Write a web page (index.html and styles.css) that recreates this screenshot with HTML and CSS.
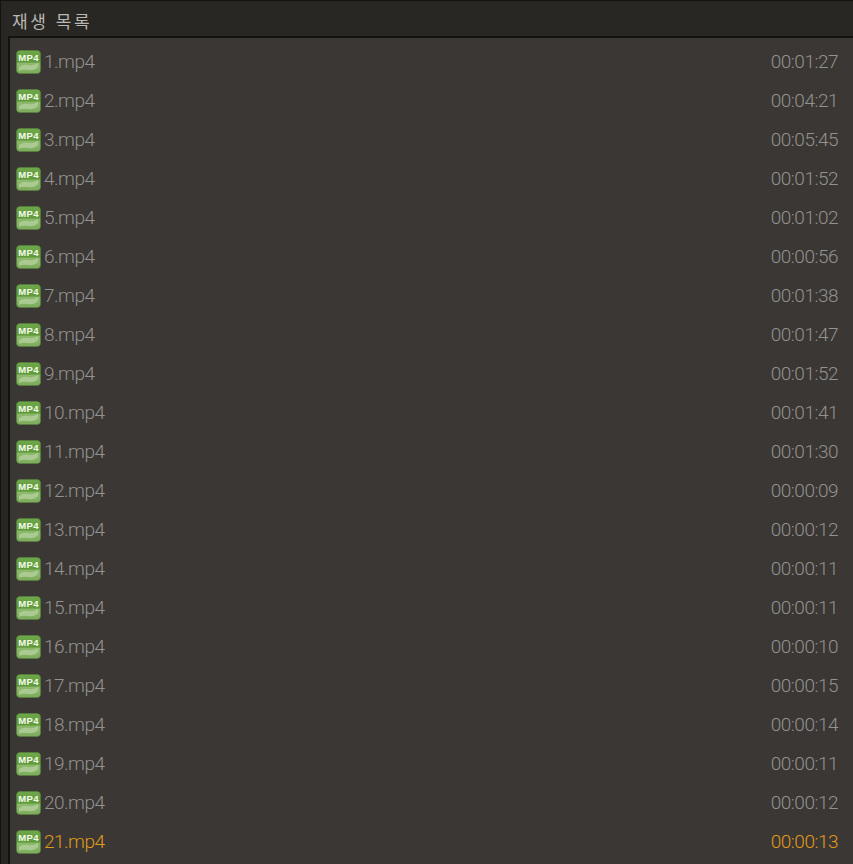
FILE: index.html
```html
<!DOCTYPE html>
<html lang="ko">
<head>
<meta charset="utf-8">
<title>재생 목록</title>
<link rel="stylesheet" href="styles.css">
</head>
<body>
<svg class="defs" width="0" height="0" aria-hidden="true">
  <defs>
    <linearGradient id="g" x1="0" y1="0" x2="0" y2="1">
      <stop offset="0" stop-color="#6fa84a"/>
      <stop offset="0.5" stop-color="#5f9a3b"/>
      <stop offset="0.56" stop-color="#8db96d"/>
      <stop offset="1" stop-color="#7dab5c"/>
    </linearGradient>
    <symbol id="mp4" viewBox="0 0 25 24">
      <rect x="0.5" y="0.5" width="24" height="23" rx="3.5" fill="url(#g)" stroke="#55853a" stroke-opacity=".6"/>
      <path d="M3 17q4-3 9-2t10-2v4q-4 4-10 3t-9 1z" fill="#b6d2a0" opacity=".75"/>
      <text class="badge" x="12.500" y="11">MP4</text>
    </symbol>
  </defs>
</svg>
<main class="player">
  <h1 class="title">재생 목록</h1>
  <ul class="list">
    <li class="row"><span class="name"><svg class="icon"><use href="#mp4"/></svg>1.mp4</span><span class="time">00:01:27</span></li>
    <li class="row"><span class="name"><svg class="icon"><use href="#mp4"/></svg>2.mp4</span><span class="time">00:04:21</span></li>
    <li class="row"><span class="name"><svg class="icon"><use href="#mp4"/></svg>3.mp4</span><span class="time">00:05:45</span></li>
    <li class="row"><span class="name"><svg class="icon"><use href="#mp4"/></svg>4.mp4</span><span class="time">00:01:52</span></li>
    <li class="row"><span class="name"><svg class="icon"><use href="#mp4"/></svg>5.mp4</span><span class="time">00:01:02</span></li>
    <li class="row"><span class="name"><svg class="icon"><use href="#mp4"/></svg>6.mp4</span><span class="time">00:00:56</span></li>
    <li class="row"><span class="name"><svg class="icon"><use href="#mp4"/></svg>7.mp4</span><span class="time">00:01:38</span></li>
    <li class="row"><span class="name"><svg class="icon"><use href="#mp4"/></svg>8.mp4</span><span class="time">00:01:47</span></li>
    <li class="row"><span class="name"><svg class="icon"><use href="#mp4"/></svg>9.mp4</span><span class="time">00:01:52</span></li>
    <li class="row"><span class="name"><svg class="icon"><use href="#mp4"/></svg>10.mp4</span><span class="time">00:01:41</span></li>
    <li class="row"><span class="name"><svg class="icon"><use href="#mp4"/></svg>11.mp4</span><span class="time">00:01:30</span></li>
    <li class="row"><span class="name"><svg class="icon"><use href="#mp4"/></svg>12.mp4</span><span class="time">00:00:09</span></li>
    <li class="row"><span class="name"><svg class="icon"><use href="#mp4"/></svg>13.mp4</span><span class="time">00:00:12</span></li>
    <li class="row"><span class="name"><svg class="icon"><use href="#mp4"/></svg>14.mp4</span><span class="time">00:00:11</span></li>
    <li class="row"><span class="name"><svg class="icon"><use href="#mp4"/></svg>15.mp4</span><span class="time">00:00:11</span></li>
    <li class="row"><span class="name"><svg class="icon"><use href="#mp4"/></svg>16.mp4</span><span class="time">00:00:10</span></li>
    <li class="row"><span class="name"><svg class="icon"><use href="#mp4"/></svg>17.mp4</span><span class="time">00:00:15</span></li>
    <li class="row"><span class="name"><svg class="icon"><use href="#mp4"/></svg>18.mp4</span><span class="time">00:00:14</span></li>
    <li class="row"><span class="name"><svg class="icon"><use href="#mp4"/></svg>19.mp4</span><span class="time">00:00:11</span></li>
    <li class="row"><span class="name"><svg class="icon"><use href="#mp4"/></svg>20.mp4</span><span class="time">00:00:12</span></li>
    <li class="row active"><span class="name"><svg class="icon"><use href="#mp4"/></svg>21.mp4</span><span class="time">00:00:13</span></li>
  </ul>
</main>
</body>
</html>
```
FILE: styles.css
```css
html, body {
  margin: 0;
  padding: 0;
  height: 100%;
  overflow: hidden;
  background: #1c1b19;
}
.defs {
  position: absolute;
}
.player {
  height: 864px;
  display: flex;
  flex-direction: column;
  background: #292724;
  border-left: 1px solid #141312;
  border-top: 1px solid #141312;
  box-sizing: border-box;
}
.title {
  margin: 0;
  height: 35px;
  flex: none;
  padding-left: 11px;
  font: 400 17px/39px "Noto Sans CJK KR", sans-serif;
  color: #b9b7b3;
  letter-spacing: 2.6px;
  overflow: hidden;
}
.list {
  flex: 1;
  margin: 0 0 0 7px;
  padding: 4px 0 0;
  list-style: none;
  background: #3a3734;
  border-left: 2px solid #131211;
  border-top: 2px solid #131211;
  overflow: hidden;
}
.row {
  height: 39px;
  display: flex;
  align-items: center;
  justify-content: space-between;
  padding: 0 15px 0 6px;
  font: 300 19px/37px Roboto, sans-serif;
  letter-spacing: -0.5px;
  color: #949290;
}
.name {
  display: flex;
  align-items: center;
  gap: 3px;
}
.icon {
  width: 25px;
  height: 24px;
  flex: none;
}
.badge {
  font: 700 9.500px "Liberation Sans", sans-serif;
  fill: #f6fbec;
  text-anchor: middle;
  letter-spacing: 0.4px;
}
.active {
  color: #e09a1c;
}
```
